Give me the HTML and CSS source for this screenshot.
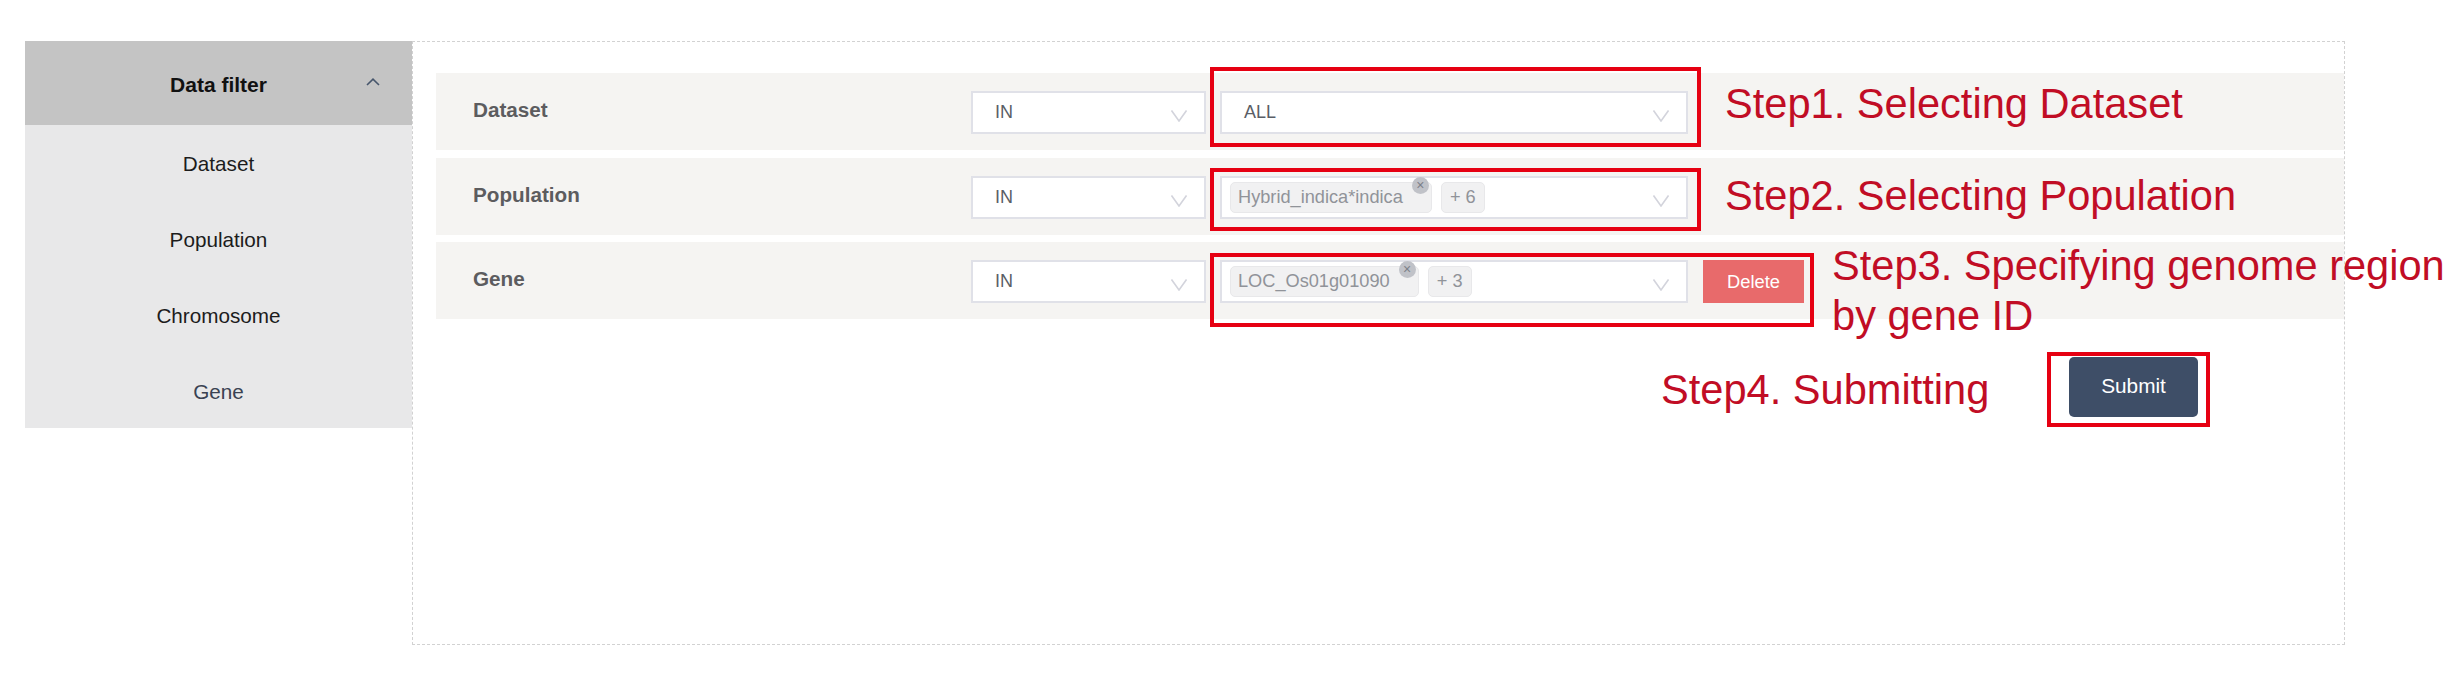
FILE: index.html
```html
<!DOCTYPE html>
<html lang="en">
<head>
  <meta charset="UTF-8">
  <title>Data filter</title>
  <link rel="stylesheet" href="styles.css">
</head>
<body>
  <div class="page">
    <div class="sidebar">
      <div class="side-head">
        <span>Data filter</span>
        <svg class="side-arrow" viewBox="0 0 14 8"><path d="M1 7 7 1.2 13 7"/></svg>
      </div>
      <div class="side-item">Dataset</div>
      <div class="side-item">Population</div>
      <div class="side-item">Chromosome</div>
      <div class="side-item side-item-last">Gene</div>
    </div>

    <div class="main">
      <div class="row">
        <div class="row-label">Dataset</div>
        <div class="select select-op">
          <span>IN</span>
          <svg class="arrow" viewBox="0 0 16 12"><path d="M.5.5 8 11 15.5.5"/></svg>
        </div>
        <div class="select select-value">
          <span class="value-text">ALL</span>
          <svg class="arrow" viewBox="0 0 16 12"><path d="M.5.5 8 11 15.5.5"/></svg>
        </div>
      </div>

      <div class="row">
        <div class="row-label">Population</div>
        <div class="select select-op">
          <span>IN</span>
          <svg class="arrow" viewBox="0 0 16 12"><path d="M.5.5 8 11 15.5.5"/></svg>
        </div>
        <div class="select select-value select-tags">
          <span class="tag tag-closable">Hybrid_indica*indica<i class="tag-close">×</i></span>
          <span class="tag">+ 6</span>
          <svg class="arrow" viewBox="0 0 16 12"><path d="M.5.5 8 11 15.5.5"/></svg>
        </div>
      </div>

      <div class="row">
        <div class="row-label">Gene</div>
        <div class="select select-op">
          <span>IN</span>
          <svg class="arrow" viewBox="0 0 16 12"><path d="M.5.5 8 11 15.5.5"/></svg>
        </div>
        <div class="select select-value select-tags">
          <span class="tag tag-closable">LOC_Os01g01090<i class="tag-close">×</i></span>
          <span class="tag">+ 3</span>
          <svg class="arrow" viewBox="0 0 16 12"><path d="M.5.5 8 11 15.5.5"/></svg>
        </div>
        <button class="btn-delete">Delete</button>
      </div>

      <div class="submit-row">
        <button class="btn-submit">Submit</button>
      </div>
    </div>

    <!-- annotations on top of the form -->
    <div class="mark mark-1"></div>
    <div class="mark mark-2"></div>
    <div class="mark mark-3"></div>
    <div class="mark mark-4"></div>
    <div class="note note-1">Step1. Selecting Dataset</div>
    <div class="note note-2">Step2. Selecting Population</div>
    <div class="note note-3">Step3. Specifying genome region<br>by gene ID</div>
    <div class="note note-4">Step4. Submitting</div>
  </div>
</body>
</html>
```

FILE: styles.css
```css
body {
  margin: 0;
  background: #fff;
  font-family: "Liberation Sans", Arial, sans-serif;
}
.page {
  position: relative;
  display: flex;
  align-items: flex-start;
  width: 2457px;
  height: 691px;
  padding: 41px 0 0 25px;
  box-sizing: border-box;
  overflow: hidden;
}

/* sidebar */
.sidebar {
  width: 387px;
  flex-shrink: 0;
  background: #e8e8e9;
}
.side-head {
  position: relative;
  display: flex;
  align-items: center;
  justify-content: center;
  height: 84px;
  box-sizing: border-box;
  padding-top: 3px;
  background: #c4c4c4;
  font-size: 21px;
  font-weight: bold;
  color: #111;
}
.side-arrow {
  position: absolute;
  right: 32px;
  top: 37px;
  width: 14px;
  height: 8px;
  fill: none;
  stroke: #47566c;
  stroke-width: 1.6;
}
.side-item {
  display: flex;
  align-items: center;
  justify-content: center;
  height: 75.75px;
  box-sizing: border-box;
  padding-top: 3px;
  font-size: 20.7px;
  color: #1c1c1c;
}
.side-item-last { color: #3a4252; }

/* main form */
.main {
  width: 1933px;
  height: 604px;
  box-sizing: border-box;
  padding: 31px 0 0 23px;
  border: 1px dashed #d2d2d2;
}
.row {
  display: flex;
  align-items: flex-start;
  height: 77px;
  box-sizing: border-box;
  padding: 18px 0 0 37px;
  margin-bottom: 7.5px;
  background: #f5f4f2;
}
.row-label {
  width: 498px;
  flex-shrink: 0;
  line-height: 38px;
  font-size: 20.7px;
  font-weight: bold;
  color: #5c5c5f;
}
.select {
  position: relative;
  display: flex;
  align-items: center;
  height: 43px;
  box-sizing: border-box;
  background: #fff;
  border: 2px solid #e0e1e8;
  font-size: 18px;
  color: #5a5e66;
}
.select-op {
  width: 235px;
  padding-left: 22px;
}
.select-value {
  width: 468px;
  margin-left: 14px;
  padding-left: 22px;
}
.select-tags {
  padding-left: 8px;
  gap: 9px;
}
.arrow {
  position: absolute;
  right: 17px;
  top: 17px;
  width: 16px;
  height: 12px;
  fill: none;
  stroke: #d3d4dc;
  stroke-width: 1.6;
}
.tag {
  position: relative;
  min-width: 44px;
  height: 31px;
  line-height: 29px;
  box-sizing: border-box;
  padding: 0 7px;
  background: #f1f1f2;
  border: 1px solid #e8e8ea;
  border-radius: 5px;
  font-size: 18.2px;
  color: #909399;
  text-align: center;
}
.tag-closable { padding-right: 28px; }
.tag-close {
  position: absolute;
  right: 2px;
  top: -6px;
  width: 17px;
  height: 17px;
  line-height: 16px;
  border-radius: 50%;
  background: #c0c2c8;
  color: #7d8088;
  font-size: 14px;
  font-style: normal;
  text-align: center;
}
.btn-delete {
  width: 101px;
  height: 43px;
  margin-left: 15px;
  padding: 0;
  border: none;
  background: #e86a6b;
  color: #fff;
  font-family: inherit;
  font-size: 18.3px;
}
.submit-row {
  display: flex;
  justify-content: flex-end;
  padding: 30.5px 146px 0 0;
}
.btn-submit {
  width: 129px;
  height: 60px;
  padding: 0 0 3px;
  border: none;
  border-radius: 5px;
  background: #3e4e67;
  color: #fff;
  font-family: inherit;
  font-size: 20.8px;
}

/* red annotation boxes and captions */
.mark {
  position: absolute;
  box-sizing: border-box;
  border: 4px solid #e60012;
}
.mark-1 { left: 1210px; top: 67px; width: 491px; height: 80px; }
.mark-2 { left: 1210px; top: 168px; width: 491px; height: 63px; }
.mark-3 { left: 1210px; top: 253px; width: 604px; height: 74px; }
.mark-4 { left: 2047px; top: 352px; width: 163px; height: 75px; }
.note {
  position: absolute;
  font-size: 41.6px;
  line-height: 50px;
  color: #c10d25;
  white-space: nowrap;
}
.note-1 { left: 1725px; top: 79px; }
.note-2 { left: 1725px; top: 171px; }
.note-3 { left: 1832px; top: 241px; }
.note-4 { left: 1661px; top: 365px; }
```
